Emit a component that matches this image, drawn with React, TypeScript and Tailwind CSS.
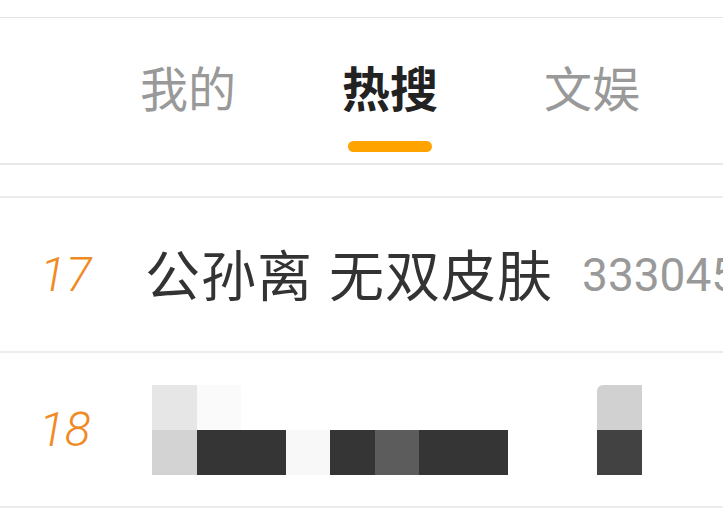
import React from 'react';

const tabs = [
  { label: '我的', active: false },
  { label: '热搜', active: true },
  { label: '文娱', active: false },
];

// pixelated (mosaic) title of row 18
const topRow = ['#e6e6e6', '#fafafa', '#fff', '#fff', '#fff', '#fff', '#fff', '#fff', '#fff', '#fff', '#d1d1d1'];
const bottomRow = ['#d3d3d3', '#353535', '#353535', '#f8f8f8', '#353535', '#5c5c5c', '#353535', '#353535', '#fff', '#fff', '#424242'];

const cjk = { fontFamily: '"Noto Sans CJK SC", "Noto Sans", sans-serif' };
const latin = { fontFamily: 'Roboto, "Liberation Sans", sans-serif' };

export default function App() {
  return (
    <div className="w-[723px] h-[526px] overflow-hidden bg-white" style={cjk}>
      <div className="h-[18px] border-b border-[#e4e4e4]" />

      {/* Tabs */}
      <div className="flex pl-[87px] pt-[44px] pb-[11px] border-b-2 border-[#e9e9e9]">
        {tabs.map((t) => (
          <div key={t.label} className="w-[202px] flex flex-col items-center">
            <span
              className={`text-[48px] leading-none ${t.active ? 'font-bold text-[#222]' : 'text-[#999]'}`}
            >
              {t.label}
            </span>
            <div className={`mt-[31px] h-[11px] w-[84px] rounded-full ${t.active ? 'bg-[#ffa300]' : 'bg-transparent'}`} />
          </div>
        ))}
      </div>

      <div className="h-[31px]" />

      {/* Row 17 */}
      <div className="h-[157px] flex items-center border-y-2 border-[#ececec] whitespace-nowrap overflow-hidden">
        <span className="shrink-0 w-[145px] pl-[40px] text-[48px] leading-none italic font-light text-[#f08a24]" style={latin}>
          17
        </span>
        <span className="shrink-0 text-[55px] tracking-[1px] leading-none text-[#333] -mt-[5px]">公孙离</span>
        <span className="shrink-0 ml-[16px] text-[55px] tracking-[1px] leading-none text-[#333] -mt-[5px]">无双皮肤</span>
        <span className="shrink-0 ml-[29px] text-[46px] leading-none text-[#999]" style={latin}>
          333045
        </span>
      </div>

      {/* Row 18 */}
      <div className="h-[155px] flex items-center border-b-2 border-[#ececec]">
        <span className="shrink-0 w-[152px] pl-[39px] text-[48px] leading-none italic font-light text-[#f08a24]" style={latin}>
          18
        </span>
        <div className="shrink-0 flex flex-col">
          <div className="flex">
            {topRow.map((c, i) => (
              <div
                key={i}
                className={`w-[44.5px] h-[45px] ${i === 10 ? 'rounded-tl-[6px]' : ''}`}
                style={{ backgroundColor: c }}
              />
            ))}
          </div>
          <div className="flex">
            {bottomRow.map((c, i) => (
              <div key={i} className="w-[44.5px] h-[45px]" style={{ backgroundColor: c }} />
            ))}
          </div>
        </div>
      </div>
    </div>
  );
}
